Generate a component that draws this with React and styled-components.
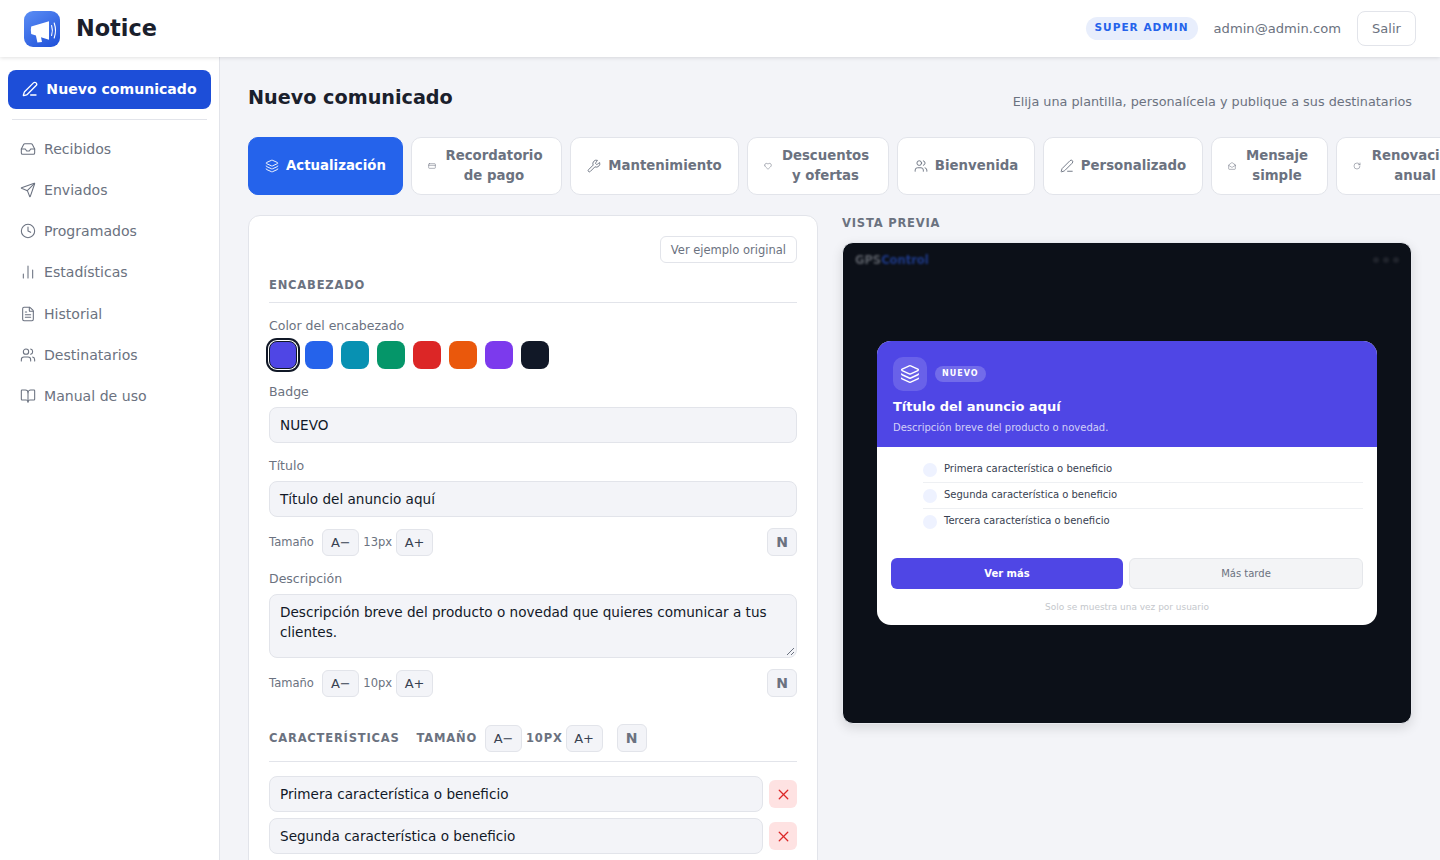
import React from 'react';
import styled, { createGlobalStyle } from 'styled-components';
import { Inbox, Send, Clock, BarChart2, FileText, Users, BookOpen, PenLine, Layers, CreditCard, Wrench, Heart, MailOpen, RotateCw, X } from 'lucide-react';

const Global = createGlobalStyle`
  * { box-sizing: border-box; }
  html, body { margin: 0; height: 100%; overflow: hidden; }
  body { font-family: "DejaVu Sans", sans-serif; background: #f3f4f8; color: #111827; }
  button, input, textarea { font-family: inherit; }
`;

const Page = styled.div`display: flex; flex-direction: column; height: 860px; overflow: hidden;`;
const Header = styled.header`
  height: 57px; flex: none; background: #fff; display: flex; align-items: center; justify-content: space-between;
  padding: 0 24px; box-shadow: 0 1px 4px rgba(0,0,0,.12); position: relative; z-index: 2;
`;
const Brand = styled.div`display: flex; align-items: center; gap: 16px;`;
const BrandName = styled.span`font-size: 22.4px; font-weight: 700; color: #1a202c; line-height: 1;`;
const LogoBox = styled.div`
  width: 36px; height: 36px; border-radius: 9px; background: linear-gradient(145deg, #5b8ef5, #1d4ed8);
  display: flex; align-items: center; justify-content: center;
`;
const HeaderRight = styled.div`display: flex; align-items: center; gap: 16px;`;
const RoleBadge = styled.span`
  background: #e8eefc; color: #2563eb; font-size: 10.56px; font-weight: 700; letter-spacing: 1px;
  padding: 3px 9px 5px; border-radius: 12px; line-height: 15px;
`;
const Email = styled.span`font-size: 13.12px; color: #6b7280;`;
const Logout = styled.button`
  width: 59px; height: 35px; background: #fff; border: 1px solid #e2e4ea; border-radius: 8px; color: #6b7280; font-size: 13px; padding: 0;
`;
const Body = styled.div`display: flex; flex: 1; min-height: 0;`;
const Sidebar = styled.aside`
  width: 220px; flex: none; background: #fff; border-right: 1px solid #e2e4ea; padding: 13px 8px;
`;
const NewBtn = styled.button`
  width: 203px; height: 39px; background: #1d4ed8; color: #fff; border: 0; border-radius: 8px; display: flex; align-items: center; justify-content: center; gap: 8px;
  font-size: 14.08px; font-weight: 700; padding: 0 0 1px;
`;
const SideDivider = styled.div`height: 1px; background: #e2e4ea; margin: 10px 4px 8.3px; width: 195px;`;
const NavList = styled.nav`display: flex; flex-direction: column;`;
const NavItem = styled.a`
  display: flex; align-items: center; gap: 8px; height: 41.2px; padding-left: 12px; color: #6b7280; font-size: 14.08px;
`;
const Main = styled.main`flex: 1; min-width: 0; padding: 24px 28px 0; overflow: hidden;`;
const TitleRow = styled.div`display: flex; justify-content: space-between; align-items: center; height: 32px;`;
const PageTitle = styled.h1`margin: 0; font-size: 19.2px; font-weight: 700; color: #1a202c;`;
const Subtitle = styled.p`margin: 8px 0 0; font-size: 12.8px; color: #6b7280;`;
const Tabs = styled.div`display: flex; gap: 8px; margin: 24px -28px 0 0; overflow: hidden;`;
const Tab = styled.button`
  flex: none; width: ${p => p.$w}px; height: 58px; border-radius: 10px; display: flex; align-items: center; justify-content: center; gap: 7px;
  font-size: 13.3px; font-weight: 700; line-height: 20px; padding: 0 16px;
  background: ${p => p.$active ? '#2563eb' : '#fff'}; color: ${p => p.$active ? '#fff' : '#6b7280'};
  border: 1px solid ${p => p.$active ? '#2563eb' : '#e2e4ea'};
`;
const TabIcon = styled.span`flex: none; display: flex;`;
const Columns = styled.div`display: grid; grid-template-columns: 570px 570px; gap: 24px; margin-top: 20px;`;
const Card = styled.section`
  background: #fff; border: 1px solid #e2e4ea; border-radius: 12px; padding: 20px; height: 800px;
`;
const ExampleRow = styled.div`display: flex; justify-content: flex-end;`;
const ExampleBtn = styled.button`
  height: 27px; padding: 0 10px; background: #fff; border: 1px solid #e2e4ea; border-radius: 6px; color: #6b7280; font-size: 11.5px;
`;
const SectionHead = styled.div`
  display: flex; align-items: center; font-size: 11.52px; font-weight: 700; letter-spacing: .8px; color: #6b7280; text-transform: uppercase;
  border-bottom: 1px solid #e2e4ea; margin-top: ${p => p.$mt}px; padding-bottom: ${p => p.$pb}px; gap: ${p => p.$gap || 0}px;
`;
const Label = styled.div`font-size: 12.5px; color: #6b7280; line-height: 16px; margin-top: ${p => p.$mt}px; margin-bottom: ${p => p.$mb || 7}px;`;
const Swatches = styled.div`display: flex; gap: 8px;`;
const Swatch = styled.div`
  width: 28px; height: 28px; border-radius: 8px; background: ${p => p.$c};
  ${p => p.$on && 'border: 1px solid #111827; box-shadow: 0 0 0 1px #fff, 0 0 0 3px #111827;'}
`;
const Field = styled.div`
  height: 36px; flex: ${p => p.$grow ? 1 : 'none'}; display: flex; align-items: center; padding: 0 10px; background: #f3f4f8; border: 1px solid #e2e4ea; border-radius: 8px; font-size: 13.6px; color: #111827;
`;
const AreaField = styled.div`
  height: 64px; padding: 7px 10px; background: #f3f4f8; border: 1px solid #e2e4ea; border-radius: 8px; font-size: 13.6px; line-height: 20px; color: #111827; position: relative;
`;
const Grip = styled.svg`position: absolute; right: 1px; bottom: 1px;`;
const SizeRow = styled.div`display: flex; align-items: center; gap: 4px; margin-top: ${p => p.$mt || 11}px;`;
const SizeLabel = styled.span`font-size: 11.52px; color: #6b7280; margin-right: 4.5px;`;
const SizeValue = styled.span`font-size: 11.52px; color: #6b7280;`;
const SizeBtn = styled.button`
  width: 37px; height: 27px; background: #f3f4f8; border: 1px solid #e2e4ea; border-radius: 6px; font-size: 13px; color: #374151; padding: 0; letter-spacing: 0; font-weight: 400;
`;
const BoldBtn = styled.button`
  width: 30px; height: 28px; margin-left: ${p => p.$ml || 'auto'}; background: #f3f4f8; border: 1px solid #e2e4ea; border-radius: 6px; font-size: 14px; font-weight: 700; color: #6b7280; padding: 0;
`;
const FeatureRow = styled.div`display: flex; align-items: center; gap: 6px; margin-top: ${p => p.$mt || 6}px;`;
const RemoveBtn = styled.button`
  width: 28px; height: 28px; background: #fee2e2; border: 0; border-radius: 6px; color: #dc2626; display: flex; align-items: center; justify-content: center; padding: 0;
`;
const CharTitle = styled.span`margin-right: 13px;`;
const CharSize = styled.span`margin-right: 4px;`;
const CharValue = styled.span`margin-right: -1px;`;
const PreviewTitle = styled.div`font-size: 11.52px; font-weight: 700; letter-spacing: .8px; color: #6b7280; line-height: 17px;`;
const Stage = styled.div`
  margin-top: 10px; height: 482px; background: #0c1018; border: 1px solid #e8eaef; border-radius: 11px; position: relative; overflow: hidden;
  display: flex; align-items: center; justify-content: center; box-shadow: 0 4px 12px rgba(0,0,0,.12);
`;
const GhostBrand = styled.div`
  position: absolute; left: 12px; top: 10px; font-size: 11.5px; font-weight: 700; color: #5a5e66; filter: blur(1.2px);
  span { color: #1e3a8a; }
`;
const GhostDots = styled.div`
  position: absolute; right: 12px; top: 14px; display: flex; gap: 4px; filter: blur(1px);
  i { width: 6px; height: 6px; border-radius: 50%; background: #20242c; }
`;
const Modal = styled.div`width: 500px; height: 284px; background: #fff; border-radius: 14px; overflow: hidden; display: flex; flex-direction: column;`;
const ModalHead = styled.div`background: #4f46e5; height: 106px; padding: 16px 16px 0; color: #fff; flex: none;`;
const ModalTop = styled.div`display: flex; align-items: center; gap: 8px;`;
const ModalIcon = styled.div`width: 34px; height: 34px; border-radius: 10px; background: rgba(255,255,255,.15); display: flex; align-items: center; justify-content: center;`;
const ModalBadge = styled.span`
  background: rgba(255,255,255,.2); border-radius: 10px; font-size: 8px; font-weight: 700; letter-spacing: 1px; padding: 0 7px; line-height: 16px; height: 16px; margin-bottom: 1px;
`;
const ModalTitle = styled.div`font-size: 13px; font-weight: 700; margin-top: 7px; line-height: 17px;`;
const ModalDesc = styled.div`font-size: 10px; margin-top: 6px; line-height: 13px; color: rgba(255,255,255,.75);`;
const FeatureList = styled.ul`list-style: none; margin: 10px 14px 0 46px; padding: 0;`;
const FeatureItem = styled.li`
  display: flex; gap: 7px; height: 26px; padding-top: 5px; font-size: 10px; line-height: 13px; color: #374151;
  border-bottom: ${p => p.$last ? 0 : '1px solid #eef0f3'};
`;
const Dot = styled.span`width: 14px; height: 14px; border-radius: 50%; background: #eef2ff; margin-top: 1px; flex: none;`;
const ModalActions = styled.div`display: flex; gap: 6px; margin: 23px 14px 0;`;
const Primary = styled.button`flex: none; width: 232px; height: 31px; background: #4f46e5; color: #fff; border: 0; border-radius: 6px; font-size: 10px; font-weight: 700; padding: 0;`;
const Secondary = styled.button`flex: 1; height: 31px; background: #f3f4f6; color: #6b7280; border: 1px solid #e5e7eb; border-radius: 6px; font-size: 10px; padding: 0;`;
const ModalNote = styled.div`text-align: center; font-size: 8.96px; color: #c4c7cc; margin-top: 13px;`;

const nav = [['Recibidos', Inbox],['Enviados', Send],['Programados', Clock],['Estadísticas', BarChart2],['Historial', FileText],['Destinatarios', Users],['Manual de uso', BookOpen]];
const tabs = [
  ['Actualización', Layers, 155, 14, true],
  ['Recordatorio de pago', CreditCard, 151, 8],
  ['Mantenimiento', Wrench, 169, 14],
  ['Descuentos y ofertas', Heart, 142, 8],
  ['Bienvenida', Users, 138, 14],
  ['Personalizado', PenLine, 160, 14],
  ['Mensaje simple', MailOpen, 117, 8],
  ['Renovación anual', RotateCw, 143, 8],
];
const colors = ['#4f46e5','#2563eb','#0891b2','#059669','#dc2626','#ea580c','#7c3aed','#111827'];

const Megaphone = () => (
  <svg width="36" height="36" viewBox="0 0 36 36" fill="none">
    <path d="M7.2 15.5L25 10.2V28.8L17 26.3L18 31L13.4 31.6L11.9 24.4L7.2 23Q6.4 19.2 7.2 15.5Z" fill="#fff"/>
    <path d="M27.6 14.5Q29.2 19.5 27.6 24.5M30.2 12Q32.8 19.5 30.2 27" stroke="#fff" strokeWidth="1.1" strokeLinecap="round"/>
  </svg>
);

export default function App() {
  return (
    <Page>
      <Global />
      <Header>
        <Brand><LogoBox><Megaphone /></LogoBox><BrandName>Notice</BrandName></Brand>
        <HeaderRight>
          <RoleBadge>SUPER ADMIN</RoleBadge>
          <Email>admin@admin.com</Email>
          <Logout>Salir</Logout>
        </HeaderRight>
      </Header>
      <Body>
        <Sidebar>
          <NewBtn><PenLine size={16} />Nuevo comunicado</NewBtn>
          <SideDivider />
          <NavList>
            {nav.map(([t, I]) => <NavItem key={t}><I size={16} strokeWidth={1.6} />{t}</NavItem>)}
          </NavList>
        </Sidebar>
        <Main>
          <TitleRow>
            <PageTitle>Nuevo comunicado</PageTitle>
            <Subtitle>Elija una plantilla, personalícela y publique a sus destinatarios</Subtitle>
          </TitleRow>
          <Tabs>
            {tabs.map(([t, I, w, s, a]) => (
              <Tab key={t} $w={w} $active={a}><TabIcon><I size={s} strokeWidth={1.6} /></TabIcon><span>{t}</span></Tab>
            ))}
          </Tabs>
          <Columns>
            <Card>
              <ExampleRow><ExampleBtn>Ver ejemplo original</ExampleBtn></ExampleRow>
              <SectionHead $mt={15} $pb={10}>Encabezado</SectionHead>
              <Label $mt={15} $mb={7}>Color del encabezado</Label>
              <Swatches>
                {colors.map((c, i) => <Swatch key={c} $c={c} $on={i === 0} />)}
              </Swatches>
              <Label $mt={15}>Badge</Label>
              <Field>NUEVO</Field>
              <Label $mt={15}>Título</Label>
              <Field>Título del anuncio aquí</Field>
              <SizeRow>
                <SizeLabel>Tamaño</SizeLabel><SizeBtn>A−</SizeBtn><SizeValue>13px</SizeValue><SizeBtn>A+</SizeBtn><BoldBtn>N</BoldBtn>
              </SizeRow>
              <Label $mt={15}>Descripción</Label>
              <AreaField>
                Descripción breve del producto o novedad que quieres comunicar a tus clientes.
                <Grip width="10" height="10" viewBox="0 0 10 10"><path d="M9 2L2 9M9 6L6 9" stroke="#6b7280" strokeWidth="1"/></Grip>
              </AreaField>
              <SizeRow>
                <SizeLabel>Tamaño</SizeLabel><SizeBtn>A−</SizeBtn><SizeValue>10px</SizeValue><SizeBtn>A+</SizeBtn><BoldBtn>N</BoldBtn>
              </SizeRow>
              <SectionHead $mt={27} $pb={9} $gap={4}>
                <CharTitle>Características</CharTitle><CharSize>Tamaño</CharSize><SizeBtn>A−</SizeBtn><CharValue>10px</CharValue><SizeBtn>A+</SizeBtn><BoldBtn $ml="10px">N</BoldBtn>
              </SectionHead>
              <FeatureRow $mt={14}><Field $grow>Primera característica o beneficio</Field><RemoveBtn><X size={17} strokeWidth={1.8} /></RemoveBtn></FeatureRow>
              <FeatureRow><Field $grow>Segunda característica o beneficio</Field><RemoveBtn><X size={17} strokeWidth={1.8} /></RemoveBtn></FeatureRow>
            </Card>
            <div>
              <PreviewTitle>VISTA PREVIA</PreviewTitle>
              <Stage>
                <GhostBrand>GPS<span>Control</span></GhostBrand>
                <GhostDots><i /><i /><i /></GhostDots>
                <Modal>
                  <ModalHead>
                    <ModalTop><ModalIcon><Layers size={20} color="#fff" strokeWidth={1.7} /></ModalIcon><ModalBadge>NUEVO</ModalBadge></ModalTop>
                    <ModalTitle>Título del anuncio aquí</ModalTitle>
                    <ModalDesc>Descripción breve del producto o novedad.</ModalDesc>
                  </ModalHead>
                  <FeatureList>
                    <FeatureItem><Dot />Primera característica o beneficio</FeatureItem>
                    <FeatureItem><Dot />Segunda característica o beneficio</FeatureItem>
                    <FeatureItem $last><Dot />Tercera característica o beneficio</FeatureItem>
                  </FeatureList>
                  <ModalActions><Primary>Ver más</Primary><Secondary>Más tarde</Secondary></ModalActions>
                  <ModalNote>Solo se muestra una vez por usuario</ModalNote>
                </Modal>
              </Stage>
            </div>
          </Columns>
        </Main>
      </Body>
    </Page>
  );
}
